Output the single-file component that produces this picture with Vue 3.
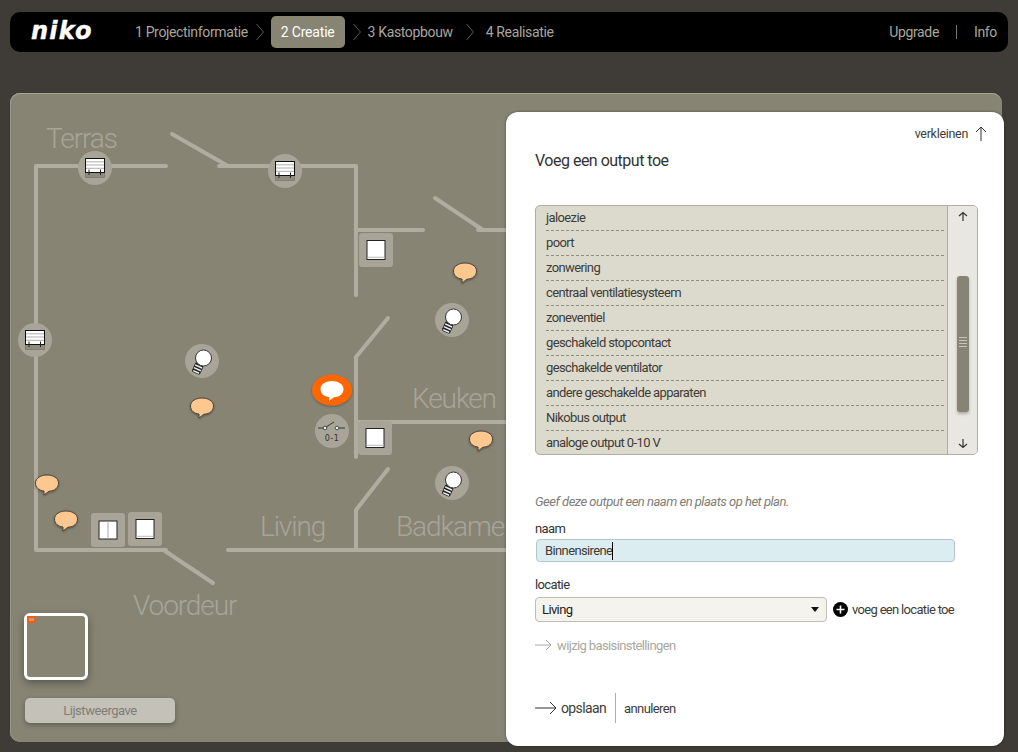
<template>
  <div class="page">
    <header class="topbar">
      <div class="logo">niko</div>
      <nav class="steps">
        <template v-for="(s, i) in steps" :key="s">
          <svg v-if="i > 0" class="chev" width="8" height="18" viewBox="0 0 8 18"><path d="M0.5 1 L7.5 9 L0.5 17" /></svg>
          <span class="step" :class="{ active: i === 1 }">{{ s }}</span>
        </template>
      </nav>
      <div class="top-links">
        <span>Upgrade</span>
        <i class="top-sep"></i>
        <span>Info</span>
      </div>
    </header>

    <main class="plan">
      <svg class="canvas" width="992" height="649" viewBox="10 93 992 649">
        <defs>
          <g id="blind">
            <rect x="-9.5" y="-9.5" width="19" height="19" fill="#8f8c7e" stroke="#77746a" stroke-width="0.7" />
            <rect x="-9.5" y="-9.5" width="19" height="14" fill="#fff" stroke="#111" stroke-width="1" />
            <path d="M-9 -6.2H9M-9 -3H9M-9 0.3H9" stroke="#999" stroke-width="0.8" />
            <path d="M-6 1.5V7M5.5 1.5V7" stroke="#222" stroke-width="1" />
          </g>
          <g id="bulb">
            <g transform="translate(-1 0) rotate(24)">
              <rect x="-4.5" y="3" width="9" height="10.5" rx="2" fill="#222" />
              <path d="M-3.8 6H3.8M-3.8 9H3.8M-3.2 12H3.2" stroke="#eee" stroke-width="1.5" />
            </g>
            <circle cx="1.5" cy="-3" r="8" fill="#fff" stroke="#333" stroke-width="1" />
          </g>
          <g id="square">
            <rect x="-17" y="-17" width="34" height="34" rx="3" fill="#a8a598" />
            <rect x="-9" y="-9.5" width="18" height="19" fill="#fff" stroke="#222" stroke-width="1" />
            <path d="M-8.5 7.3H8.5" stroke="#bbb" stroke-width="1" />
          </g>
          <g id="double">
            <rect x="-17" y="-17" width="34" height="34" rx="3" fill="#a8a598" />
            <rect x="-9" y="-9" width="18" height="18" fill="#fff" stroke="#222" stroke-width="1" />
            <path d="M0 -8.5V8.5" stroke="#aaa" stroke-width="1" />
          </g>
          <path id="speech" d="M-3 8 L-3 12 L2 8.2 C8 8 11.5 4.5 11.5 0 C11.5 -5 6 -8 0 -8 C-6 -8 -11.5 -5 -11.5 0 C-11.5 4.5 -8 7.5 -3 8Z" />
          <filter id="soft" x="-30%" y="-30%" width="160%" height="170%">
            <feDropShadow dx="0" dy="1" stdDeviation="1" flood-color="#000" flood-opacity="0.35" />
          </filter>
        </defs>

        <g class="walls">
          <path v-for="w in walls" :key="w" :d="w" />
        </g>

        <text v-for="l in labels" :key="l.t" class="room" :x="l.x" :y="l.y">{{ l.t }}</text>

        <g v-for="n in blinds" :key="n.x">
          <circle :cx="n.x" :cy="n.y" r="17" fill="#a8a598" />
          <use href="#blind" :x="n.x" :y="n.y" />
        </g>
        <g v-for="n in bulbs" :key="n.x + n.y">
          <circle :cx="n.x" :cy="n.y" r="17" fill="#a8a598" />
          <use href="#bulb" :x="n.x" :y="n.y" />
        </g>
        <use v-for="n in squares" :key="n.x" href="#square" :x="n.x" :y="n.y" />
        <use href="#double" x="108" y="530" />
        <use v-for="n in bubbles" :key="n.x" href="#speech" :x="n.x" :y="n.y" class="bubble" filter="url(#soft)" />

        <ellipse cx="332" cy="390" rx="20" ry="15.5" fill="#ff6600" filter="url(#soft)" />
        <use href="#speech" x="332" y="389" fill="#fff" />

        <circle cx="332" cy="431" r="17" fill="#a8a598" />
        <path d="M318 428H324M339 428H345M326 427L334 422" stroke="#333" stroke-width="1" fill="none" />
        <circle cx="325" cy="428" r="1.8" fill="#eee" stroke="#333" stroke-width="0.8" />
        <circle cx="337" cy="428" r="1.8" fill="#eee" stroke="#333" stroke-width="0.8" />
        <text x="332" y="441" class="zero">0-1</text>
      </svg>

      <div class="minimap"><span class="mini-mark"></span></div>
      <button class="list-btn">Lijstweergave</button>
    </main>

    <aside class="panel">
      <div class="shrink">
        <span>verkleinen</span>
        <svg width="12" height="15" viewBox="0 0 12 15"><path d="M6 15V1M1 6L6 1L11 6" /></svg>
      </div>
      <h1>Voeg een output toe</h1>

      <div class="listbox">
        <ul>
          <li v-for="o in outputs" :key="o">{{ o }}</li>
        </ul>
        <div class="scroll">
          <svg class="sc-arrow" width="10" height="10" viewBox="0 0 10 10"><path d="M5 10V2M1 5L5 1.5L9 5" /></svg>
          <div class="thumb"><span></span><span></span><span></span><span></span></div>
          <svg class="sc-arrow down" width="10" height="10" viewBox="0 0 10 10"><path d="M5 0V8M1 5L5 8.5L9 5" /></svg>
        </div>
      </div>

      <p class="hint">Geef deze output een naam en plaats op het plan.</p>

      <label class="lbl">naam</label>
      <div class="name-input"><span>Binnensirene</span><i class="caret"></i></div>

      <label class="lbl loc">locatie</label>
      <div class="loc-row">
        <div class="select">
          <span>Living</span>
          <i class="tri"></i>
        </div>
        <svg class="plus" width="15" height="15" viewBox="0 0 15 15"><circle cx="7.5" cy="7.5" r="7.5" fill="#000" /><path d="M7.5 3.5V11.5M3.5 7.5H11.5" stroke="#fff" stroke-width="1.6" /></svg>
        <span class="add">voeg een locatie toe</span>
      </div>

      <div class="settings">
        <svg width="17" height="12" viewBox="0 0 17 12"><path d="M0 6H16M11 1L16 6L11 11" /></svg>
        <span>wijzig basisinstellingen</span>
      </div>

      <div class="actions">
        <svg width="22" height="14" viewBox="0 0 22 14"><path d="M0 7H21M15 1L21 7L15 13" /></svg>
        <span class="save">opslaan</span>
        <i class="act-sep"></i>
        <span class="cancel">annuleren</span>
      </div>
    </aside>
  </div>
</template>

<script setup>
const steps = ['1 Projectinformatie', '2 Creatie', '3 Kastopbouw', '4 Realisatie']

const outputs = [
  'jaloezie',
  'poort',
  'zonwering',
  'centraal ventilatiesysteem',
  'zoneventiel',
  'geschakeld stopcontact',
  'geschakelde ventilator',
  'andere geschakelde apparaten',
  'Nikobus output',
  'analoge output 0-10 V'
]

// plan uses page coordinates, see the viewBox
const walls = [
  'M166 166H36V550H166',
  'M172 134L228 166H219',
  'M228 166H356V295',
  'M356 230H423',
  'M435 198L483 230H478',
  'M483 230H510',
  'M388 318L356 357V457',
  'M356 422H510',
  'M388 469L356 510V550',
  'M228 550H510',
  'M165 551L213 583'
]

const labels = [
  { t: 'Terras', x: 46, y: 148 },
  { t: 'Keuken', x: 412, y: 408 },
  { t: 'Living', x: 260, y: 536 },
  { t: 'Badkamer', x: 396, y: 536 },
  { t: 'Voordeur', x: 133, y: 615 }
]

const blinds = [{ x: 95, y: 168 }, { x: 285, y: 171 }, { x: 35, y: 340 }]
const bulbs = [{ x: 202, y: 361 }, { x: 452, y: 320 }, { x: 452, y: 483 }]
const squares = [{ x: 376, y: 250 }, { x: 375, y: 438 }, { x: 145, y: 529 }]
const bubbles = [{ x: 465, y: 271 }, { x: 481, y: 439 }, { x: 47, y: 483 }, { x: 66, y: 519 }, { x: 202, y: 406 }]
</script>

<style>
html, body { margin: 0; background: #3f3c37; overflow: hidden; }
</style>

<style scoped>
.page { position: relative; width: 1018px; height: 752px; background: #3f3c37; font-family: Roboto, "Liberation Sans", sans-serif; overflow: hidden; padding-top: 12px; box-sizing: border-box; }

.topbar { display: flex; align-items: center; height: 40px; margin: 0 10px; padding: 0 11px 0 21px; background: #000; border-radius: 10px; color: #a9a79c; font-size: 14px; letter-spacing: -0.35px; }
.logo { width: 104px; font-family: "DejaVu Sans", sans-serif; font-weight: 700; font-style: italic; font-size: 24px; letter-spacing: 1.2px; color: #fff; -webkit-text-stroke: 0.4px #fff; line-height: 1; margin-top: -3px; }
.steps { display: flex; align-items: center; flex: 1; }
.step { white-space: nowrap; }
.step.active { background: #878474; color: #fff; padding: 0 10px; height: 32px; line-height: 32px; border-radius: 5px; letter-spacing: -0.2px; }
.chev { margin: 0 7px 0 8px; fill: none; stroke: #5c5a52; stroke-width: 1; }
.chev:nth-last-child(2) { margin: 0 12px 0 13px; }
.top-links { display: flex; align-items: center; }
.top-sep { width: 1px; height: 14px; background: #777; margin: 0 17px 0 17px; }

.plan { position: relative; width: 992px; height: 649px; margin: 41px 0 0 10px; background: #878474; border-radius: 10px 10px 0 10px; box-shadow: inset 0 1px 0 #a8a598, inset 1px 0 0 #9a9788; overflow: hidden; }
.canvas { display: block; }
.walls path { fill: none; stroke: #b0ada0; stroke-width: 4; stroke-linecap: round; stroke-linejoin: round; }
.room { font-family: Roboto, sans-serif; font-weight: 300; font-size: 28px; fill: #a8a598; letter-spacing: -1.1px; }
.bubble { fill: #fdc88f; stroke: #4a4638; stroke-width: 1; }
.zero { font-family: "DejaVu Sans", sans-serif; font-size: 8px; text-anchor: middle; fill: #333; letter-spacing: 0.4px; }

.minimap { position: absolute; left: 14px; top: 520px; width: 58px; height: 61px; border: 3px solid #fff; border-radius: 6px; box-shadow: 0 3px 8px rgba(0, 0, 0, 0.35); }
.mini-mark { position: absolute; left: 0; top: 0; width: 5px; height: 3px; border: 2px solid #ff5a00; background: #a8a598; }
.list-btn { position: absolute; left: 15px; top: 605px; width: 150px; height: 25px; padding: 0; border: 0; border-radius: 5px; background: #c4c1b9; color: #7f7d74; font-family: Roboto, sans-serif; font-size: 13px; letter-spacing: -0.45px; box-shadow: 0 2px 5px rgba(0, 0, 0, 0.3); }

.panel { position: absolute; left: 506px; top: 112px; width: 498px; height: 634px; padding: 0 29px; box-sizing: border-box; background: #fff; border-radius: 12px; color: #3f3c37; box-shadow: 0 0 3px rgba(0, 0, 0, 0.4); letter-spacing: -0.62px; font-size: 13px; }
.shrink { display: flex; justify-content: flex-end; align-items: center; gap: 7px; height: 15px; margin: 14px -12px 0 0; font-size: 12.5px; letter-spacing: -0.3px; }
.shrink svg { fill: none; stroke: #333; stroke-width: 1; }
h1 { margin: 8px 0 0; font-size: 16px; font-weight: 400; line-height: 24px; color: #333; letter-spacing: -0.5px; }

.listbox { display: flex; height: 250px; width: 443px; margin-top: 32px; box-sizing: border-box; background: #dcdacd; border: 1px solid #aeada3; border-radius: 5px; overflow: hidden; }
ul { list-style: none; margin: 0; padding: 0 3px 0 10px; flex: 1; }
li { height: 25px; line-height: 23px; box-sizing: border-box; border-bottom: 1px dashed #8f8d83; }
li:last-child { border-bottom: 0; }
.scroll { position: relative; box-sizing: border-box; width: 30px; background: #e9e7e1; border-left: 1px solid #aeada3; display: flex; flex-direction: column; align-items: center; }
.sc-arrow { margin-top: 5px; fill: none; stroke: #333; stroke-width: 1.2; }
.sc-arrow.down { position: absolute; bottom: 5px; }
.thumb { width: 12px; height: 136px; margin-top: 55px; box-sizing: border-box; background: #878474; border-radius: 3px; box-shadow: 0 2px 3px rgba(0, 0, 0, 0.25); padding-top: 61px; }
.thumb span { display: block; height: 1px; margin: 0 2px 2px; background: #c8c6bb; }

.hint { margin: 39px 0 0; font-size: 13px; font-style: italic; color: #807e76; line-height: 15px; letter-spacing: -0.5px; }
.lbl { display: block; margin-top: 12px; font-size: 13px; line-height: 15px; color: #333; }
.name-input { display: flex; align-items: center; width: 419px; height: 23px; margin: 3px 0 0 1px; padding-left: 8px; box-sizing: border-box; background: #dcedf2; border: 1px solid #b7c5c8; border-radius: 4px; }
.caret { width: 1px; height: 18px; background: #000; }
.lbl.loc { margin-top: 15px; }
.loc-row { display: flex; align-items: center; margin-top: 5px; }
.select { display: flex; justify-content: space-between; align-items: center; width: 292px; height: 25px; padding: 0 6px; box-sizing: border-box; background: #f5f3ee; border: 1px solid #c0beb4; border-radius: 4px; color: #222; }
.tri { width: 0; height: 0; border: 4.5px solid transparent; border-top: 5px solid #111; border-bottom: 0; margin-right: 1px; }
.plus { margin: 0 4px 0 6px; }
.add { white-space: nowrap; letter-spacing: -0.68px; }
.settings { display: flex; align-items: center; gap: 5px; margin-top: 14px; color: #aaa8a0; height: 18px; }
.settings svg { fill: none; stroke: #aaa8a0; stroke-width: 1; }
.actions { display: flex; align-items: center; height: 30px; margin-top: 39px; }
.actions svg { fill: none; stroke: #333; stroke-width: 1; }
.save { margin-left: 4px; font-size: 14px; }
.act-sep { width: 1px; height: 30px; background: #b0ada0; margin: 0 8px 0 9px; }
</style>
